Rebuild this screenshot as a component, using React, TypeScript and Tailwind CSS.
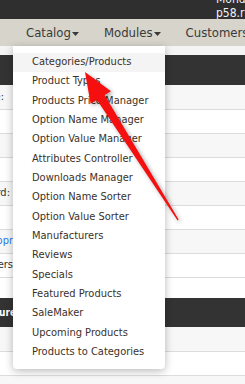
const items = [
  "Categories/Products",
  "Product Types",
  "Products Price Manager",
  "Option Name Manager",
  "Option Value Manager",
  "Attributes Controller",
  "Downloads Manager",
  "Option Name Sorter",
  "Option Value Sorter",
  "Manufacturers",
  "Reviews",
  "Specials",
  "Featured Products",
  "SaleMaker",
  "Upcoming Products",
  "Products to Categories",
];

const Caret = () => (
  <svg width="7" height="4" viewBox="0 0 7 4" className="ml-[1px] mt-[2px]">
    <path d="M0 0 L7 0 L3.5 4 Z" fill="#3a3a3a" />
  </svg>
);

// label cells are cut by the window edge, text keeps only its right end
const Label = ({ text, w, className = "" }: { text: string; w: string; className?: string }) => (
  <div className={`${w} overflow-hidden flex justify-end`}>
    <span className={`whitespace-nowrap shrink-0 ${className}`}>{text}</span>
  </div>
);

const Row = ({
  h,
  bg,
  line = true,
  children,
}: {
  h: string;
  bg: string;
  line?: boolean;
  children?: React.ReactNode;
}) => (
  <div className={`${h} ${bg} ${line ? "border-b border-[#dcdcdc]" : ""} flex items-center`}>
    {children}
  </div>
);

export default function App() {
  return (
    <div className="relative w-[245px] h-[384px] overflow-hidden bg-white font-['DejaVu_Sans_Condensed','DejaVu_Sans',sans-serif]">
      {/* Top bar */}
      <div className="h-[19px] bg-[#2f2f2f] overflow-hidden pl-[216px] text-[12px] leading-[12px] text-[#eef2fa] whitespace-nowrap">
        <div className="-mt-[7px]">Monday</div>
        <div className="mt-[2px]">p58.ru</div>
      </div>

      {/* Nav */}
      <div className="h-[27px] bg-[#d6d4cb] flex items-center gap-[25px] pl-[26px] pt-[1px] text-[13px] text-[#3a3a3a] whitespace-nowrap">
        <div className="flex items-center">
          Catalog
          <Caret />
        </div>
        <div className="flex items-center">
          Modules
          <Caret />
        </div>
        <div>Customers</div>
      </div>

      <div className="h-[9px] bg-[#f4f4f4]" />
      <div className="h-[30px] bg-[#333333]" />

      <div className="text-[11px] text-[#333]">
        <Row h="h-[25px]" bg="bg-[#f7f7f7]">
          <Label text="Name:" w="w-[4px]" />
        </Row>
        <Row h="h-[24px]" bg="bg-white" />
        <Row h="h-[24px]" bg="bg-[#f7f7f7]" />
        <Row h="h-[24px]" bg="bg-white" />
        <Row h="h-[24px]" bg="bg-[#f7f7f7]">
          <Label text="Password:" w="w-[10px]" />
        </Row>
        <Row h="h-[24px]" bg="bg-white" />
        <Row h="h-[24px]" bg="bg-[#f7f7f7]">
          <Label text="Appr" w="w-[13px]" className="text-[#2a7ae2]" />
        </Row>
        <Row h="h-[24px]" bg="bg-white">
          <Label text="Users" w="w-[13px]" />
        </Row>
        <Row h="h-[20px]" bg="bg-white" line={false} />
        <div className="h-[29px] bg-[#333333] flex items-center">
          <Label text="Feature" w="w-[16px]" className="font-bold text-white text-[10px]" />
        </div>
        <Row h="h-[25px]" bg="bg-[#f7f7f7]" />
        <Row h="h-[24px]" bg="bg-white" />
        <Row h="h-[10px]" bg="bg-[#f7f7f7]" line={false} />
      </div>

      {/* Catalog dropdown */}
      <div className="absolute left-[13px] top-[46px] w-[152px] bg-white rounded-b-[4px] shadow-[0_2px_8px_rgba(0,0,0,0.28)] pt-[7px] pb-[6px]">
        {items.map((item, i) => (
          <div
            key={item}
            className={`h-[19.35px] flex items-center pl-[19px] pb-[1px] text-[11px] text-[#3b3128] whitespace-nowrap ${
              i === 0 ? "bg-[#f4f4f4]" : ""
            }`}
          >
            {item}
          </div>
        ))}
      </div>

      {/* Red arrow */}
      <svg
        className="absolute left-0 top-0 pointer-events-none drop-shadow-[2px_2px_2px_rgba(0,0,0,0.35)]"
        width="245"
        height="384"
        viewBox="0 0 245 384"
      >
        <polygon
          points="85,72 111,91.2 104.6,95.1 178.6,219.6 177.6,220.4 97,99.9 90.6,103.8"
          fill="#f50f0f"
        />
      </svg>
    </div>
  );
}
